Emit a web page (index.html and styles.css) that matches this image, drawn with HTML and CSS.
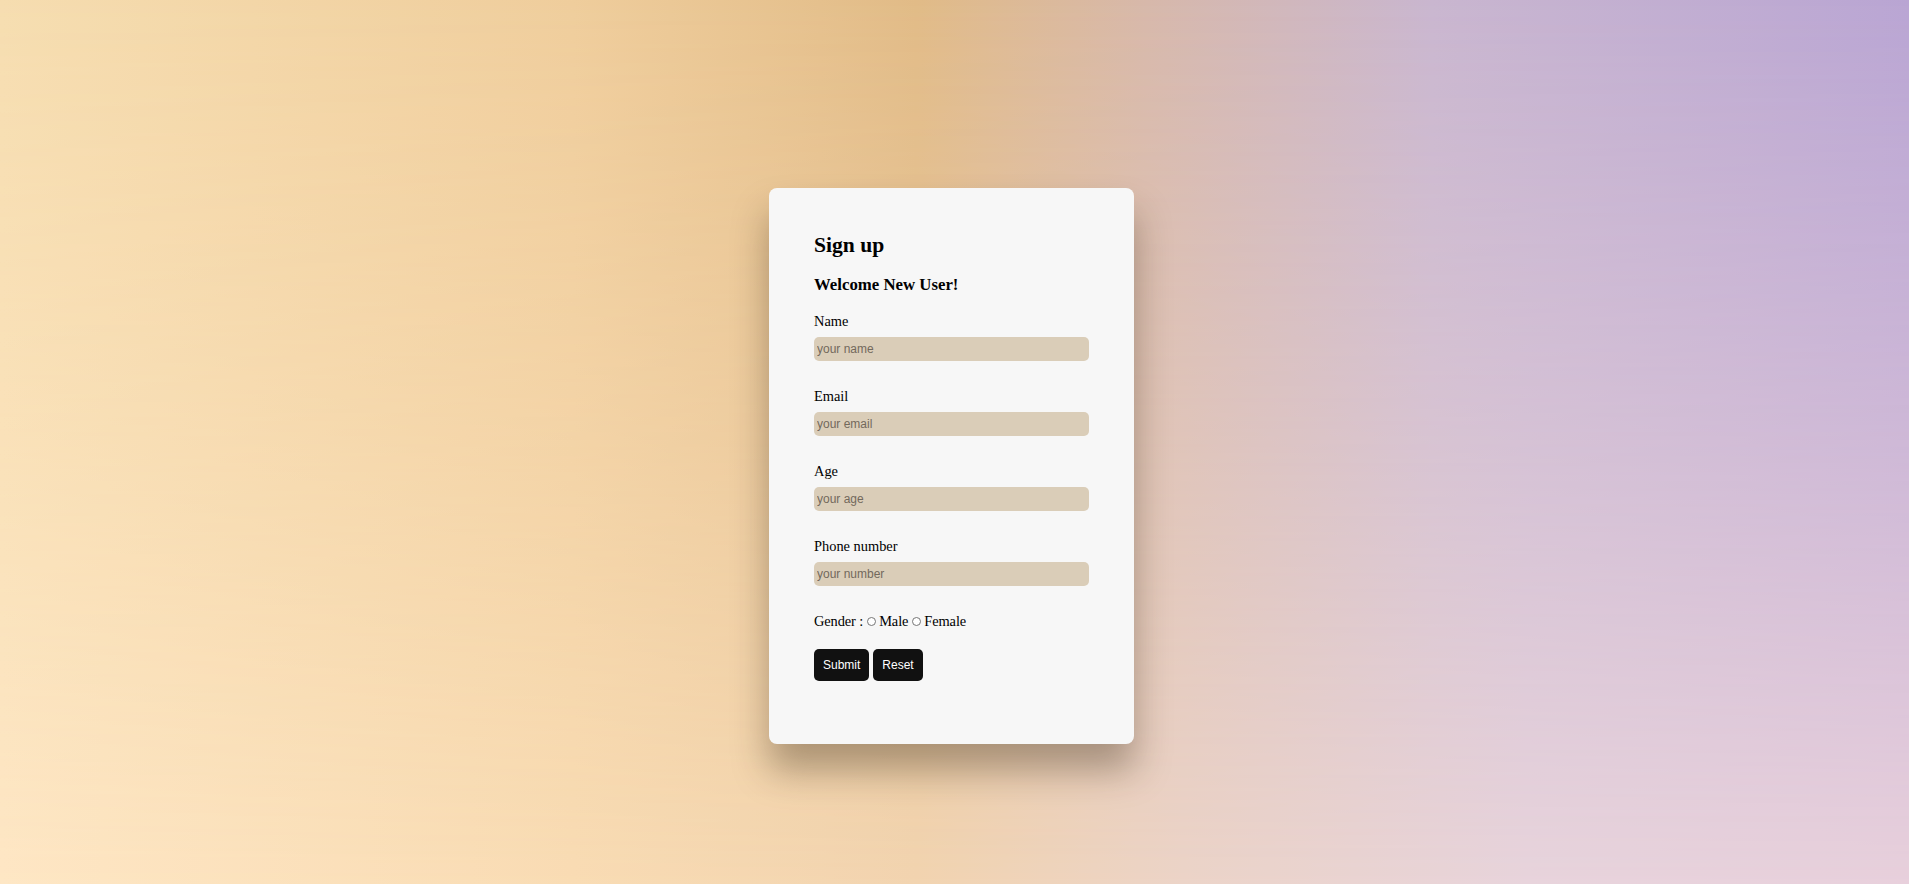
FILE: index.html
```html
<!DOCTYPE html>
<html lang="en">
<head>
<meta charset="utf-8">
<title>Sign up</title>
<link rel="stylesheet" href="styles.css">
</head>
<body>
<div class="page">
  <form class="card">
    <h2 class="title">Sign up</h2>
    <h3 class="subtitle">Welcome New User!</h3>
    <label class="label" for="name">Name</label>
    <input class="field" id="name" type="text" placeholder="your name">
    <label class="label" for="email">Email</label>
    <input class="field" id="email" type="email" placeholder="your email">
    <label class="label" for="age">Age</label>
    <input class="field" id="age" type="text" placeholder="your age">
    <label class="label" for="phone">Phone number</label>
    <input class="field" id="phone" type="text" placeholder="your number">
    <div class="gender">Gender : <input class="radio" type="radio" name="g"> Male <input class="radio" type="radio" name="g"> Female</div>
    <div class="actions">
      <button class="btn" type="button">Submit</button>
      <button class="btn" type="button">Reset</button>
    </div>
  </form>
</div>
</body>
</html>
```

FILE: styles.css
```css
html, body {
  margin: 0;
  height: 100%;
}
body {
  position: relative;
  overflow: hidden;
  font-family: "Liberation Serif", "Times New Roman", serif;
  color: #000;
  background: linear-gradient(to right, #fee7c5 0%, #f9dcb4 30%, #f2d4b0 48%, #ecd4c8 62%, #e8d4dc 80%, #e8d0dc 100%);
}
body::before {
  content: "";
  position: absolute;
  inset: 0;
  background: linear-gradient(to right, #f6ddb0 0%, #efcd9c 30%, #e1bb87 48%, #d7b8aa 60%, #c9b6cf 75%, #b9a5d3 100%);
  -webkit-mask-image: linear-gradient(to bottom, #000 0%, rgba(0,0,0,0.55) 50%, transparent 100%);
  mask-image: linear-gradient(to bottom, #000 0%, rgba(0,0,0,0.55) 50%, transparent 100%);
}
.page {
  position: relative;
  display: flex;
  justify-content: center;
  padding: 188px 6px 0 0;
}
.card {
  width: 365px;
  box-sizing: border-box;
  padding: 44px 45px 63px;
  background: #f7f7f7;
  border-radius: 8px;
  box-shadow: 0 26px 36px rgba(50, 35, 20, 0.36);
  display: flex;
  flex-direction: column;
}
.title {
  margin: 0;
  font-size: 21.6px;
  line-height: 26px;
  font-weight: bold;
}
.subtitle {
  margin: 17px 0 0;
  font-size: 16.8px;
  line-height: 20px;
  font-weight: bold;
}
.label {
  display: block;
  margin-top: 27px;
  font-size: 14.4px;
  line-height: 17px;
}
.subtitle + .label {
  margin-top: 18px;
}
.field {
  margin-top: 7px;
  height: 24px;
  box-sizing: border-box;
  width: 100%;
  border: none;
  border-radius: 5px;
  background: #dacdb8;
  padding: 0 3px;
  font-family: "Liberation Sans", Arial, sans-serif;
  font-size: 12px;
  color: #222;
  outline: none;
}
.field::placeholder {
  color: #73695c;
}
.gender {
  margin-top: 27px;
  font-size: 14.4px;
  line-height: 17px;
  letter-spacing: -0.1px;
}
.radio {
  -webkit-appearance: none;
  appearance: none;
  display: inline-block;
  width: 9px;
  height: 9px;
  margin: 0;
  box-sizing: border-box;
  border: 1px solid #767676;
  border-radius: 50%;
  background: #fff;
  vertical-align: baseline;
}
.actions {
  margin-top: 19px;
  display: flex;
  gap: 4px;
}
.btn {
  height: 32px;
  padding: 0 9px;
  border: none;
  border-radius: 5px;
  background: #111;
  color: #fff;
  font-family: "Liberation Sans", Arial, sans-serif;
  font-size: 12px;
}
```
